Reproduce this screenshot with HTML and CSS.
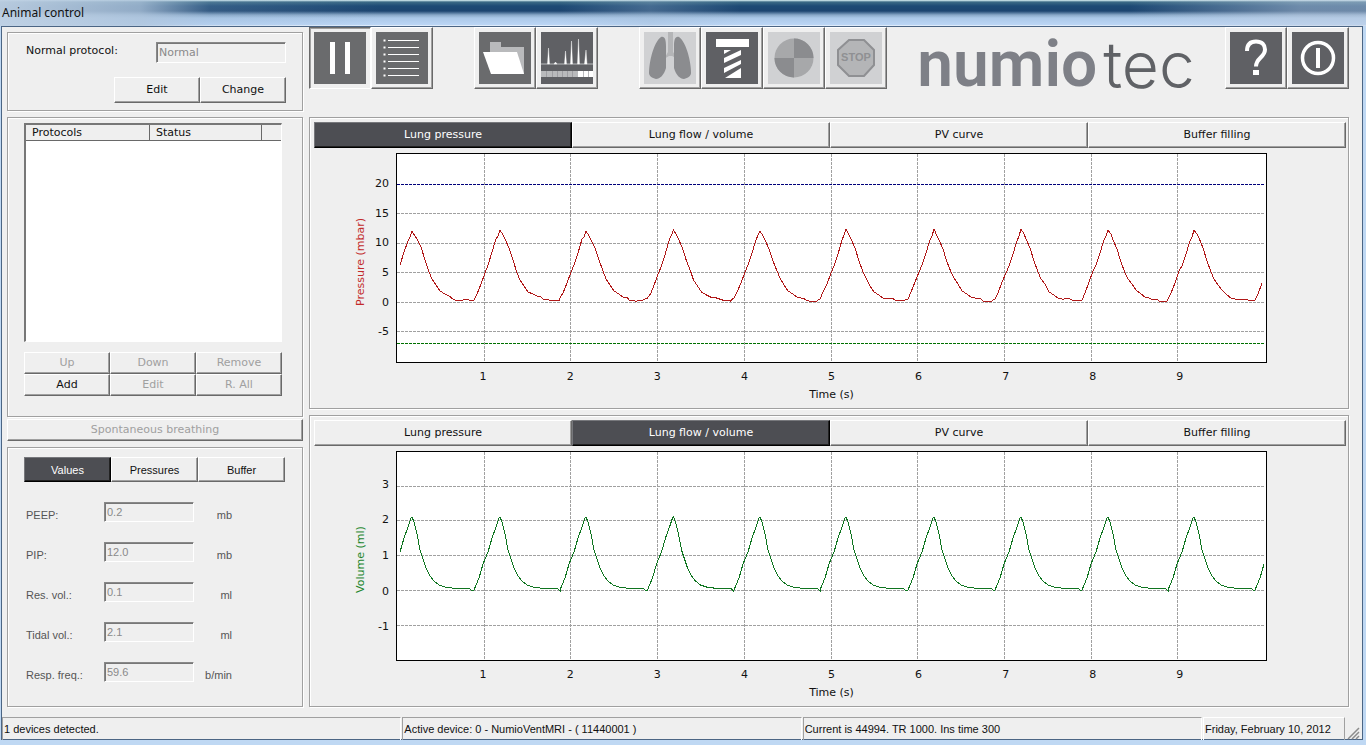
FILE: index.html
```html
<!DOCTYPE html>
<html lang="en">
<head>
    <meta charset="utf-8">
    <title>Animal control</title>
    <link rel="stylesheet" href="styles.css">
</head>
<body>
<div class="window">
    <header class="titlebar">Animal control</header>
    <div class="client">
        <main class="main">
            <div class="sidebar">
                <section class="panel protocol">
                    <div class="protocol-row">
                        <label for="protocol">Normal protocol:</label>
                        <input type="text" id="protocol" class="field" value="Normal" disabled>
                    </div>
                    <div class="protocol-buttons">
                        <button type="button" class="btn">Edit</button>
                        <button type="button" class="btn">Change</button>
                    </div>
                </section>

                <section class="panel protocols">
                    <div class="list">
                        <table>
                            <thead>
                                <tr><th class="col-name">Protocols</th><th class="col-status">Status</th><th></th></tr>
                            </thead>
                            <tbody></tbody>
                        </table>
                    </div>
                    <div class="list-buttons">
                        <button type="button" class="btn" disabled>Up</button>
                        <button type="button" class="btn" disabled>Down</button>
                        <button type="button" class="btn" disabled>Remove</button>
                        <button type="button" class="btn">Add</button>
                        <button type="button" class="btn" disabled>Edit</button>
                        <button type="button" class="btn" disabled>R. All</button>
                    </div>
                </section>

                <button type="button" class="btn spontaneous" disabled>Spontaneous breathing</button>

                <section class="panel values">
                    <div class="value-tabs">
                        <button type="button" class="btn active">Values</button>
                        <button type="button" class="btn">Pressures</button>
                        <button type="button" class="btn">Buffer</button>
                    </div>
                    <div class="value-row">
                        <label for="peep">PEEP:</label>
                        <input type="text" id="peep" class="field" value="0.2" disabled>
                        <span class="unit">mb</span>
                    </div>
                    <div class="value-row">
                        <label for="pip">PIP:</label>
                        <input type="text" id="pip" class="field" value="12.0" disabled>
                        <span class="unit">mb</span>
                    </div>
                    <div class="value-row">
                        <label for="resvol">Res. vol.:</label>
                        <input type="text" id="resvol" class="field" value="0.1" disabled>
                        <span class="unit">ml</span>
                    </div>
                    <div class="value-row">
                        <label for="tidal">Tidal vol.:</label>
                        <input type="text" id="tidal" class="field" value="2.1" disabled>
                        <span class="unit">ml</span>
                    </div>
                    <div class="value-row">
                        <label for="freq">Resp. freq.:</label>
                        <input type="text" id="freq" class="field" value="59.6" disabled>
                        <span class="unit">b/min</span>
                    </div>
                </section>
            </div>

            <div class="content">
                <div class="toolbar">
                    <div class="tool-group">
                        <button type="button" class="tool pressed" aria-label="Pause">
                            <svg width="52" height="52" viewBox="0 0 52 52"><rect width="52" height="52" fill="#6a6b6d"/><path d="M16 10h5v32h-5zM31 10h5v32h-5z" fill="#fff"/></svg>
                        </button>
                        <button type="button" class="tool" aria-label="Log">
                            <svg width="52" height="52" viewBox="0 0 52 52"><rect width="52" height="52" fill="#6a6b6d"/><path d="M12 8.500h31M12 15.500h31M12 22.500h31M12 29.500h31M12 36.500h31M12 43.500h31" stroke="#fff"/><path d="M7.500 8.500h2M7.500 15.500h2M7.500 22.500h2M7.500 29.500h2M7.500 36.500h2M7.500 43.500h2" stroke="#fff" stroke-width="2"/></svg>
                        </button>
                    </div>
                    <div class="tool-group">
                        <button type="button" class="tool" aria-label="Open">
                            <svg width="52" height="52" viewBox="0 0 52 52"><rect width="52" height="52" fill="#6a6b6d"/><path d="M11 10h11v5h23v27H20L11 20z" fill="#b9babc"/><path d="M4 20h34l7 22H12z" fill="#fff"/></svg>
                        </button>
                        <button type="button" class="tool" aria-label="Spectrum">
                            <svg width="52" height="52" viewBox="0 0 52 52"><rect width="52" height="52" fill="#5f6064"/><path d="M0 32h52" stroke="#b9babc"/><path d="M6.500 32l1-16 1 16zM13 32l1.500-2 1.500 2zM23.500 32l1-13 1 13zM29.500 32l1-23 1 23zM36.500 32l1-25 1 25zM43.500 32l1.500-14 1 14z" fill="#fff" stroke="#fff" stroke-width=".4"/><rect y="39" width="37" height="6" fill="#b9babc"/><rect x="37" y="39" width="15" height="6" fill="#fff"/><path d="M5.500 39v6M11.500 39v6M16.500 39v6M21.500 39v6M26.500 39v6M31.500 39v6M42.500 39v6M47.500 39v6" stroke="#8b8c90" stroke-width=".6"/></svg>
                        </button>
                    </div>
                    <div class="tool-group">
                        <button type="button" class="tool" aria-label="Ventilate" disabled>
                            <svg width="52" height="52" viewBox="0 0 52 52"><rect width="52" height="52" fill="#d0d1d3"/><path d="M24 0h5v20l5 7-6-3h-3l-5 3 4-7z" fill="#b4b5b7"/><path d="M17 5c4-1 5 3 5 9v22c-2 7-6 11-10 11-4-1-7-3-7-6 0-10 4-30 12-36zM35 5c-4-1-5 3-5 9v22c2 7 6 11 10 11 4-1 7-3 7-6 0-10-4-30-12-36z" fill="#8b8c8f"/></svg>
                        </button>
                        <button type="button" class="tool" aria-label="Screw">
                            <svg width="52" height="52" viewBox="0 0 52 52"><rect width="52" height="52" fill="#5f6064"/><path d="M10 7h33v8H10zM18 18h7l-7 4zM18 26l17-8v5l-17 8zM18 36l17-8v4l-17 9zM19 46l16-10v10z" fill="#fff"/></svg>
                        </button>
                        <button type="button" class="tool" aria-label="Balance" disabled>
                            <svg width="52" height="52" viewBox="0 0 52 52"><rect width="52" height="52" fill="#d0d1d3"/><circle cx="26" cy="26" r="19.500" fill="#a7a8aa"/><path d="M26 26V6.500A19.500 19.500 0 0 1 45.500 26zM26 26v19.500A19.500 19.500 0 0 1 6.500 26z" fill="#8b8c8f"/></svg>
                        </button>
                        <button type="button" class="tool" aria-label="Stop" disabled>
                            <svg width="52" height="52" viewBox="0 0 52 52"><rect width="52" height="52" fill="#d0d1d3"/><path d="M19 8h15l10 10v15L34 44H19L8 33V18z" fill="#b4b5b7" stroke="#8f9093" stroke-width="2"/><text x="26" y="29" class="stop-text">STOP</text></svg>
                        </button>
                    </div>
                    <div class="logo"><span class="logo-bold">numio</span><span class="logo-light">tec</span></div>
                    <div class="tool-group">
                        <button type="button" class="tool" aria-label="Help">
                            <svg width="52" height="52" viewBox="0 0 52 52"><rect width="52" height="52" fill="#5f6064"/><path d="M17 19C17 12 21 9.500 26 9.500c6 0 9 3.500 9 8 0 8-9 8-9 17" fill="none" stroke="#fff" stroke-width="4"/><rect x="23" y="38" width="6" height="5" fill="#fff"/></svg>
                        </button>
                        <button type="button" class="tool" aria-label="Power">
                            <svg width="52" height="52" viewBox="0 0 52 52"><rect width="52" height="52" fill="#5f6064"/><circle cx="26" cy="26" r="15.500" fill="none" stroke="#fff" stroke-width="3.500"/><rect x="24" y="16" width="4" height="20" fill="#fff"/></svg>
                        </button>
                    </div>
                </div>

                <section class="panel chart-panel">
                    <div class="chart-tabs">
                        <button type="button" class="btn active">Lung pressure</button>
                        <button type="button" class="btn">Lung flow / volume</button>
                        <button type="button" class="btn">PV curve</button>
                        <button type="button" class="btn">Buffer filling</button>
                    </div>
                    <div class="chart">
                        <div class="y-title pressure">Pressure (mbar)</div>
                        <div class="y-ticks pressure-ticks"><span>20</span><span>15</span><span>10</span><span>5</span><span>0</span><span>-5</span></div>
                        <svg class="plot" id="pressurePlot" viewBox="0 0 869 208" preserveAspectRatio="none"></svg>
                        <div class="x-ticks"><span>1</span><span>2</span><span>3</span><span>4</span><span>5</span><span>6</span><span>7</span><span>8</span><span>9</span></div>
                        <div class="x-title">Time (s)</div>
                    </div>
                </section>

                <section class="panel chart-panel">
                    <div class="chart-tabs">
                        <button type="button" class="btn">Lung pressure</button>
                        <button type="button" class="btn active">Lung flow / volume</button>
                        <button type="button" class="btn">PV curve</button>
                        <button type="button" class="btn">Buffer filling</button>
                    </div>
                    <div class="chart">
                        <div class="y-title volume">Volume (ml)</div>
                        <div class="y-ticks volume-ticks"><span>3</span><span>2</span><span>1</span><span>0</span><span>-1</span></div>
                        <svg class="plot" id="volumePlot" viewBox="0 0 869 208" preserveAspectRatio="none"></svg>
                        <div class="x-ticks"><span>1</span><span>2</span><span>3</span><span>4</span><span>5</span><span>6</span><span>7</span><span>8</span><span>9</span></div>
                        <div class="x-title">Time (s)</div>
                    </div>
                </section>
            </div>
        </main>

        <footer class="statusbar">
            <span class="status-cell">1 devices detected.</span>
            <span class="status-cell">Active device: 0 - NumioVentMRI - ( 11440001 )</span>
            <span class="status-cell">Current is 44994. TR 1000. Ins time 300</span>
            <span class="status-cell date">Friday, February 10, 2012</span>
            <svg class="grip" width="14" height="14" viewBox="0 0 14 14"><path d="M2 13L13 2M6 13l7-7M10 13l3-3" stroke="#8c8c8c" stroke-width="1.500"/></svg>
        </footer>
    </div>
</div>
<script src="script.js"></script>
</body>
</html>
```

FILE: styles.css
```css
* {
    box-sizing: border-box;
}

body {
    margin: 0;
    background: #efefef;
    font-family: Verdana, "DejaVu Sans", sans-serif;
    font-size: 11px;
    line-height: 14px;
    color: #111;
}

.window {
    display: flex;
    flex-direction: column;
    min-height: 100vh;
    padding: 0 3px 5px 1px;
    background: #bfd8f3;
}

.titlebar {
    height: 26px;
    margin: 0 -3px 0 -1px;
    padding: 6px 2px 0;
    font-family: "Segoe UI", "Noto Sans", sans-serif;
    font-size: 12px;
    background:
        linear-gradient(to right, rgba(190, 208, 227, 0.95) 0, rgba(175, 197, 220, 0.8) 140px, rgba(150, 180, 210, 0.2) 210px, transparent 380px),
        linear-gradient(to right, transparent 560px, rgba(160, 185, 210, 0.3) 650px, transparent 740px),
        linear-gradient(to right, transparent 1130px, rgba(190, 205, 225, 0.5) 1300px),
        linear-gradient(to bottom, #e3f8fb 0, #3b6a86 2px, #1d4a75 6px, #1d4570 11px, #8aa9c9 15px, #abc8e8 18px, #bcd6f5 25px, #fff 26px);
}

.client {
    flex: 1;
    display: flex;
    flex-direction: column;
    border: 1px solid #4b6584;
    background: #efefef;
}

.main {
    flex: 1;
    display: flex;
    gap: 6px;
    padding: 0 13px 10px 5px;
}

.sidebar {
    width: 296px;
    padding-top: 5px;
    display: flex;
    flex-direction: column;
}

.content {
    flex: 1;
    display: flex;
    flex-direction: column;
    min-width: 0;
}

.panel {
    border: 1px solid #a0a0a0;
    box-shadow: 1px 1px 0 #fff, inset 1px 1px 0 #fff;
}

/* controls */
.btn {
    height: 25px;
    padding: 0;
    border: 1px solid #fff;
    border-right-color: #696969;
    border-bottom-color: #696969;
    box-shadow: inset -1px -1px 0 #a0a0a0;
    background: #efefef;
    font: inherit;
    color: #111;
}

.btn:disabled {
    color: #a0a0a0;
}

.btn.active {
    background: #4d4e53;
    border-color: #77787c #000 #000 #77787c;
    box-shadow: inset -1px -1px 0 #222;
    color: #fff;
}

.field {
    min-width: 0;
    height: 20px;
    padding: 0 2px;
    border: 1px solid #fff;
    border-top-color: #888;
    border-left-color: #888;
    box-shadow: inset 1px 1px 0 #777;
    background: #efefef;
    font: inherit;
    color: #8a8a8a;
}

/* left column */
.protocol {
    padding: 9px 16px 7px 18px;
}

.protocol-row {
    display: flex;
    justify-content: space-between;
}

.protocol-row label {
    padding-top: 2px;
}

.protocol-row .field {
    width: 130px;
    height: 21px;
}

.protocol-buttons {
    display: flex;
    justify-content: flex-end;
    margin-top: 14px;
}

.protocol-buttons .btn {
    width: 86px;
    height: 26px;
}

.protocols {
    margin-top: 6px;
    padding: 5px 20px 20px 16px;
}

.list {
    height: 219px;
    border: 1px solid #fff;
    border-top: 2px solid #777;
    border-left: 2px solid #777;
    background: #fff;
}

.list table {
    width: 100%;
    border-collapse: separate;
    border-spacing: 0;
}

.list th {
    height: 16px;
    padding: 0 6px;
    border-right: 1px solid #696969;
    border-bottom: 1px solid #696969;
    background: #efefef;
    font-weight: normal;
    text-align: left;
}

.list th:last-child {
    border-right: none;
}

.col-name {
    width: 124px;
}

.col-status {
    width: 112px;
}

.list-buttons {
    display: grid;
    grid-template-columns: repeat(3, 1fr);
    margin-top: 10px;
}

.list-buttons .btn {
    height: 22px;
}

.spontaneous {
    height: 22px;
    margin-top: 2px;
}

.values {
    margin-top: 6px;
    padding: 9px 17px 24px 16px;
    font-family: "Liberation Sans", Arial, sans-serif;
}

.value-tabs {
    display: grid;
    grid-template-columns: repeat(3, 1fr);
    margin-bottom: 20px;
}

.value-row {
    display: grid;
    grid-template-columns: 78px 90px 38px;
    margin: 0 0 20px 2px;
    color: #555;
}

.value-row:last-child {
    margin-bottom: 0;
}

.value-row label,
.unit {
    padding-top: 6px;
}

.unit {
    text-align: right;
}

/* toolbar */
.toolbar {
    display: flex;
    align-items: flex-start;
    gap: 41px;
    height: 90px;
}

.tool-group {
    display: flex;
}

.tool {
    width: 62px;
    height: 62px;
    padding: 4px;
    border: 1px solid #fff;
    border-right-color: #696969;
    border-bottom-color: #696969;
    box-shadow: inset -1px -1px 0 #a0a0a0;
    background: #efefef;
}

.tool.pressed {
    border-color: #696969 #fff #fff #696969;
    box-shadow: inset 1px 1px 0 #a0a0a0;
}

.tool svg {
    display: block;
}

.stop-text {
    font: bold 11px "Liberation Sans", Arial, sans-serif;
    fill: #8f9093;
    text-anchor: middle;
}

.logo {
    flex: 1;
    display: flex;
    justify-content: center;
    gap: 6px;
    margin: 0 -16px;
    font-size: 64px;
    line-height: 76px;
}

.logo-bold {
    font-family: Roboto, sans-serif;
    font-weight: 600;
    color: #7e8087;
}

.logo-light {
    font-family: Inter, sans-serif;
    font-weight: 300;
    color: #606266;
}

/* charts */
.chart-panel {
    padding: 4px 2px 6px 4px;
}

.chart-panel + .chart-panel {
    margin-top: 6px;
}

.chart-tabs {
    display: grid;
    grid-template-columns: repeat(4, 1fr);
}

.chart-tabs .btn {
    height: 26px;
}

.chart {
    display: grid;
    grid-template-columns: 14px 28px 1fr;
    padding: 5px 79px 0 40px;
}

.y-title {
    writing-mode: vertical-rl;
    transform: rotate(180deg);
    text-align: center;
    padding-bottom: 8px;
}

.y-title.pressure {
    color: #c22a2a;
}

.y-title.volume {
    color: #22862c;
}

.y-ticks {
    display: flex;
    flex-direction: column;
    padding: 16px 7px 16px 0;
    text-align: right;
}

.y-ticks span {
    flex: 1;
    display: flex;
    align-items: center;
    justify-content: flex-end;
}

.plot {
    width: 100%;
    height: 210px;
    border: 1px solid #000;
    background: #fff;
}

.plot * {
    fill: none;
    stroke-width: 1px;
    vector-effect: non-scaling-stroke;
    shape-rendering: crispEdges;
}

.grid-line {
    stroke: #a0a0a0;
    stroke-dasharray: 3 1;
}

.limit {
    stroke-dasharray: 3 1;
}

.limit.high {
    stroke: #00007a;
}

.limit.low {
    stroke: #007000;
}

.curve.pressure {
    stroke: #b01818;
}

.curve.volume {
    stroke: #0f7520;
}

.x-ticks {
    grid-column: 3;
    display: flex;
    margin: 7px 5% 0;
}

.x-ticks span {
    flex: 1;
    text-align: center;
}

.x-title {
    grid-column: 3;
    margin-top: 4px;
    text-align: center;
}

/* status bar */
.statusbar {
    display: grid;
    grid-template-columns: 1fr 1fr 1fr 142px 16px;
    column-gap: 1px;
    height: 22px;
    font-family: "Liberation Sans", Arial, sans-serif;
}

.status-cell {
    padding: 4px 1px;
    border-top: 1px solid #a0a0a0;
    border-left: 1px solid #a0a0a0;
    border-right: 1px solid #fff;
    white-space: nowrap;
}

.status-cell.date {
    border-color: #fff #a0a0a0 #fff #fff;
}

.grip {
    align-self: end;
}
```

FILE: script.js
```javascript
// x position of every breath peak
var peaks = [15, 103, 189, 276.5, 363, 449, 537, 624, 711, 797, 884];

// one breath, [x offset from the peak, y]
var pressureBreath = [
    [-26, 145], [-23, 139], [-19, 129], [-15, 118], [-12, 111], [-8, 99], [-4, 86], [-2, 82], [0, 76],
    [3, 81], [5, 85], [9, 94], [13, 107], [17, 118], [20, 125], [24, 131], [28, 137],
    [33, 140], [37, 143], [41, 144], [43, 145], [46, 145], [49, 146], [51, 146], [54, 146], [57, 147], [59, 146]
];
var volumeBreath = [
    [-26, 436], [-24, 431], [-21, 424], [-17, 410], [-12, 398], [-8, 384], [-4, 373], [-1, 364], [0, 363],
    [2, 368], [5, 380], [8, 396], [11, 405], [14, 414], [18, 422], [22, 427], [27, 431], [33, 433],
    [40, 434], [48, 434], [58, 435], [60, 437]
];
var jitter = [0, 1, -1, 0, 0, 1, 0, -1, 1, 0, -1, 1, 0];

function points(breath, shift, noise) {
    var list = [];
    peaks.forEach(function (peak, i) {
        breath.forEach(function (p, j) {
            var x = peak + p[0];
            var y = p[1] - shift;
            if (noise) y += jitter[(i * 5 + j * 3) % jitter.length];
            if (x >= 3 && x <= 867) list.push(x + "," + y);
        });
    });
    return list.join(" ");
}

function line(x1, y1, x2, y2, name) {
    return '<line class="' + name + '" x1="' + x1 + '" y1="' + y1 + '" x2="' + x2 + '" y2="' + y2 + '"/>';
}

function grid(rows) {
    var out = "";
    for (var i = 1; i <= 9; i++) {
        out += line(86.7 * i + 0.5, 0, 86.7 * i + 0.5, 208, "grid-line");
    }
    rows.forEach(function (y) {
        out += line(0, y, 867, y, "grid-line");
    });
    return out;
}

document.getElementById("pressurePlot").innerHTML =
    grid([59.5, 89.5, 118.5, 148.5, 177.5]) +
    line(0, 30.5, 867, 30.5, "limit high") +
    line(0, 189.5, 867, 189.5, "limit low") +
    '<polyline class="curve pressure" points="' + points(pressureBreath, 0, true) + '"/>';

document.getElementById("volumePlot").innerHTML =
    grid([34.5, 68.5, 103.5, 138.5, 173.5]) +
    '<polyline class="curve volume" points="' + points(volumeBreath, 298, false) + '"/>';
```
